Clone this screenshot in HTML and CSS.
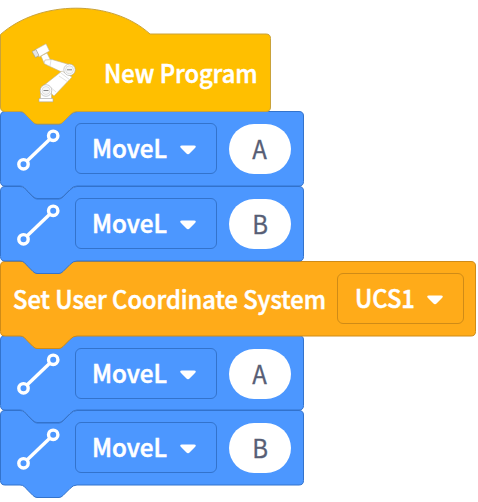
FILE: index.html
```
<!DOCTYPE html>
<html lang="en">
<head>
<meta charset="utf-8">
<title>New Program</title>
<link rel="stylesheet" href="styles.css">
</head>
<body>
<svg width="0" height="0" class="defs">
  <defs>
    <path id="move-shape" d="M.5 5Q.5 .5 5 .5H20C24 .5 25 3 28 6L33 11Q35 13 37 13H59Q61 13 63 11L70 4Q73 .5 77 .5H299Q303.500 .5 303.500 5V70.500Q303.500 75 299 75H77Q73 75 70 78.500L63 85.500Q61 87.500 59 87.500H37Q35 87.500 33 85.500L28 80.500C25 77.500 24 75 20 75H5Q.5 75 .5 70.500Z"/>
    <g id="line-icon" fill="none" stroke="#fff" stroke-width="3.400"><path d="M27 50 50 28"/><circle cx="23.500" cy="53.300" r="4.700"/><circle cx="53.200" cy="24.800" r="4.700"/></g>
    <path id="caret" d="M2 1.500H14Q17 1.500 15 4L10 9Q8 11.500 6 9L1 4Q-1 1.500 2 1.500Z"/>
  </defs>
</svg>
<main class="stack">
  <section class="block hat">
    <svg class="shape" width="272" height="118"><path d="M.5 26.500C40 -8.500 112 -8.500 150 26H266Q270.500 26 270.500 30.500V99Q270.500 103.500 266 103.500H77Q73 103.500 70 107L63 114Q61 116 59 116H37Q35 116 33 114L28 109C25 106 24 103.500 20 103.500H5Q.5 103.500 .5 99Z"/></svg>
    <svg class="robot" width="46" height="60" viewBox="0 0 46 60" fill="#fff" stroke="#c0b496" stroke-width=".6" stroke-linejoin="round">
      <path d="M9 13 15 10 18 16 21 19 17 23 12 20Z"/>
      <path d="M3.500 6.500 14 .8 17.500 8 7 14Z"/><path d="M0 8.500 4 6.500 7 12.500 3.500 14.500Z" fill="#e4e4e4" stroke="#999"/>
      <path d="M13 17 20 16.500 39 22 36 32 18 23.500 12 20.500Z"/>
      <path d="M30 28 40 34 22 53 11 43Z"/>
      <path d="M29 30 38 37M27 33 36 39M16 42 24 49M19 17 18 23" stroke="#ccc"/>
      <path d="M8.500 47H19.500V56H8.500Z"/>
      <g stroke="#aaa"><circle cx="37.500" cy="26.800" r="5.700"/><circle cx="37.500" cy="26.800" r="4" fill="#f6f6f6" stroke="#ccc"/>
      <circle cx="14" cy="47.500" r="5.800"/><circle cx="14" cy="47.500" r="4" fill="#f6f6f6" stroke="#ccc"/>
      <path d="M7 55.500H21V58.800H7Z"/></g><path d="M35 26.800H40M11.500 47.500H16.500" stroke="#888" stroke-width="1"/>
    </svg>
    <span class="label title">New Program</span>
  </section>
  <section class="block move m1">
    <svg class="shape" width="304" height="89"><use href="#move-shape"/><use href="#line-icon"/></svg>
    <div class="field"><span class="label">MoveL</span><svg class="caret" width="16" height="12"><use href="#caret"/></svg></div>
    <span class="pill"><span class="value">A</span></span>
  </section>
  <section class="block move m2">
    <svg class="shape" width="304" height="89"><use href="#move-shape"/><use href="#line-icon"/></svg>
    <div class="field"><span class="label">MoveL</span><svg class="caret" width="16" height="12"><use href="#caret"/></svg></div>
    <span class="pill"><span class="value">B</span></span>
  </section>
  <section class="block system">
    <svg class="shape" width="477" height="89"><path d="M.5 5Q.5 .5 5 .5H471Q475.500 .5 475.500 5V70.500Q475.500 75 471 75H77Q73 75 70 78.500L63 85.500Q61 87.500 59 87.500H37Q35 87.500 33 85.500L28 80.500C25 77.500 24 75 20 75H5Q.5 75 .5 70.500Z"/></svg>
    <span class="sentence"><span class="label">Set User Coordinate System</span></span>
    <div class="field"><span class="label">UCS1</span><svg class="caret" width="16" height="12"><use href="#caret"/></svg></div>
  </section>
  <section class="block move m3">
    <svg class="shape" width="304" height="89"><use href="#move-shape"/><use href="#line-icon"/></svg>
    <div class="field"><span class="label">MoveL</span><svg class="caret" width="16" height="12"><use href="#caret"/></svg></div>
    <span class="pill"><span class="value">A</span></span>
  </section>
  <section class="block move m4">
    <svg class="shape" width="304" height="89"><use href="#move-shape"/><use href="#line-icon"/></svg>
    <div class="field"><span class="label">MoveL</span><svg class="caret" width="16" height="12"><use href="#caret"/></svg></div>
    <span class="pill"><span class="value">B</span></span>
  </section>
</main>
</body>
</html>
```
FILE: styles.css
```
* { box-sizing: border-box; }
body { margin: 0; background: #fff; overflow: hidden; font: 500 25px/36px "Noto Sans CJK SC", sans-serif; }
.defs { position: absolute; }
.stack { width: 478px; height: 502px; padding-top: 8px; display: flex; flex-direction: column; }
.block { position: relative; display: flex; align-items: center; height: 74.750px; flex: none; color: #fff; isolation: isolate; }
.shape { position: absolute; inset: 0 auto auto 0; z-index: -1; overflow: visible; }
.hat { height: 103px; z-index: 6; fill: #ffbf00; stroke: #c9a23a; padding-left: 32px; }
.robot { margin-top: 26px; }
.title { margin: 25px 0 0 26px; }
.move { fill: #4c97ff; stroke: #3373cc; padding-left: 75px; gap: 12px; }
.m1 { z-index: 5; }
.m2 { z-index: 4; }
.system { z-index: 3; fill: #ffab19; stroke: #cf8b17; padding-left: 13px; }
.m3 { z-index: 2; }
.m4 { z-index: 1; }
.label { display: inline-block; white-space: nowrap; transform: scaleX(.946); transform-origin: left; -webkit-text-stroke: .55px #fff; }
.sentence { width: 324px; }
.move .label { transform: scaleX(.968); margin: -3px 0 0 -1px; }
.system .label { margin-top: -2px; }
.field { display: flex; align-items: center; justify-content: space-between; height: 51px; width: 142px; margin-top: 1px; padding: 0 20px 0 17px; border: 1px solid #3373cc; border-radius: 6px; }
.system .field { width: 127px; border-color: #cf8b17; }
.caret { fill: #fff; stroke: none; margin-top: 3px; }
.pill { display: flex; align-items: center; justify-content: center; width: 62px; height: 50px; margin-top: 2px; border-radius: 25px; background: #fff; color: #575e75; font-weight: 400; }
.value { transform: scaleX(.96); margin-top: -2px; -webkit-text-stroke: .3px #575e75; }
```
